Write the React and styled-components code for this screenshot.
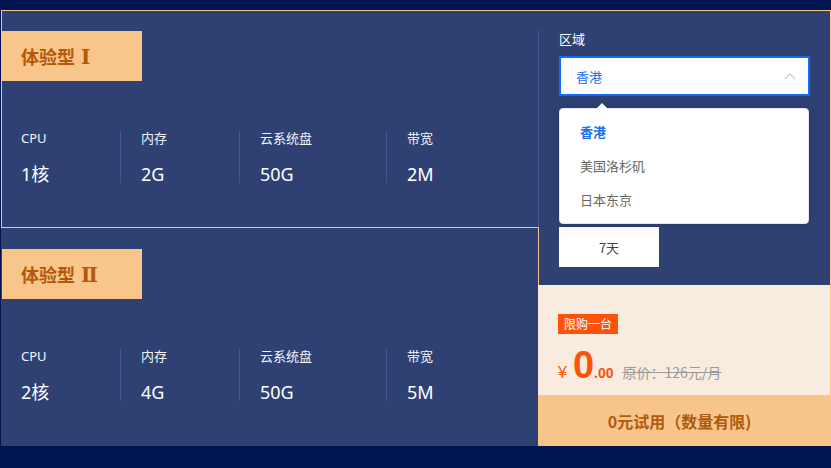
import React from "react";
import styled, { createGlobalStyle } from "styled-components";

const GlobalStyle = createGlobalStyle`
  html, body { margin: 0; padding: 0; background: #001550; }
  body { font-family: "Noto Sans", "Noto Sans CJK SC", sans-serif; }
  * { box-sizing: border-box; }
`;

const ORANGE = "#f7c58a";
const CARD = "#2f4173";

const Page = styled.div`
  width: 831px;
  height: 468px;
  padding: 10px 0 0 1px;
`;

const Wrap = styled.div`
  display: flex;
  width: 830px;
  height: 436px;
`;

const PlanList = styled.div`
  width: 537px;
  display: flex;
  flex-direction: column;
`;

const PlanCard = styled.div`
  height: 218px;
  background: ${CARD};
  border: 1px solid ${(p) => (p.$active ? ORANGE : "transparent")};
  border-right: 0;
  padding-top: 20px;
`;

const Badge = styled.div`
  width: 140px;
  height: 50px;
  background: #f8c68b;
  color: #b5580b;
  font-family: "Noto Sans CJK SC", sans-serif;
  font-weight: 700;
  font-size: 18px;
  line-height: 50px;
  padding-left: 19px;
  white-space: nowrap;
`;

const Numeral = styled.span`
  font-family: "DejaVu Serif", "Liberation Serif", serif;
  font-weight: 700;
  font-size: 20px;
  margin-left: 6px;
`;

const Specs = styled.div`
  display: flex;
  margin-top: 50px;
`;

const Spec = styled.div`
  width: ${(p) => p.$w}px;
  padding-left: ${(p) => (p.$first ? 19 : 20)}px;
  border-left: ${(p) => (p.$first ? "0" : "1px solid #45578a")};
  color: #fff;
  height: 52px;
`;

const SpecLabel = styled.div`
  font-size: 13px;
  line-height: 14px;
  color: #f2f4fa;
`;

const SpecValue = styled.div`
  margin-top: 20px;
  font-size: 18px;
  line-height: 18px;
`;

const Right = styled.div`
  width: 293px;
  display: flex;
  flex-direction: column;
`;

const Config = styled.div`
  position: relative;
  height: 275px;
  background: ${CARD};
  border-top: 1px solid ${ORANGE};
  border-right: 1px solid ${ORANGE};
  padding: 19px 20px 0 21px;

  &::before {
    content: "";
    position: absolute;
    left: 0;
    top: 19px;
    height: 197px;
    width: 1px;
    background: #45578a;
  }
  &::after {
    content: "";
    position: absolute;
    left: 0;
    top: 216px;
    bottom: 0;
    width: 1px;
    background: ${ORANGE};
  }
`;

const FieldLabel = styled.div`
  font-family: "Noto Sans CJK SC", sans-serif;
  font-size: 13px;
  line-height: 18px;
  color: #fff;
`;

const SelectWrap = styled.div`
  position: relative;
  margin-top: 8px;
  width: 251px;
`;

const SelectBox = styled.div`
  height: 40px;
  background: #fff;
  border: 2px solid #0d6cfa;
  display: flex;
  align-items: center;
  justify-content: space-between;
  padding: 0 12px 0 15px;
  font-family: "Noto Sans CJK SC", sans-serif;
  font-size: 13px;
  color: #1a6ef0;
`;

const Dropdown = styled.div`
  position: absolute;
  z-index: 5;
  top: 52px;
  left: 0;
  width: 250px;
  background: #fff;
  border: 1px solid #e4e7ed;
  border-radius: 4px;
  box-shadow: 0 2px 12px rgba(0, 0, 0, 0.1);
  padding: 6px 0 6px;

  &::before {
    content: "";
    position: absolute;
    top: -6px;
    left: 36px;
    border-left: 6px solid transparent;
    border-right: 6px solid transparent;
    border-bottom: 6px solid #fff;
  }
`;

const Option = styled.div`
  height: 34px;
  line-height: 34px;
  padding-left: 20px;
  font-family: "Noto Sans CJK SC", sans-serif;
  font-size: 13px;
  color: ${(p) => (p.$selected ? "#1a6ef0" : "#666")};
  font-weight: ${(p) => (p.$selected ? 700 : 400)};
`;

const Duration = styled.div`
  margin-top: 131px;
  width: 100px;
  height: 40px;
  background: #fff;
  color: #444;
  font-family: "Noto Sans CJK SC", sans-serif;
  font-size: 13px;
  display: flex;
  align-items: center;
  justify-content: center;
`;

const PriceArea = styled.div`
  height: 110px;
  background: #f8ebe0;
  border-right: 1px solid ${ORANGE};
  padding: 27px 0 0 20px;
`;

const Tag = styled.div`
  display: inline-block;
  height: 20px;
  width: 60px;
  background: #fe520a;
  color: #fff;
  font-family: "Noto Sans CJK SC", sans-serif;
  font-size: 12px;
  line-height: 20px;
  text-align: center;
`;

const PriceRow = styled.div`
  display: flex;
  align-items: baseline;
  margin-top: 12px;
  height: 38px;
  line-height: 38px;
  font-family: "Liberation Sans", Arial, sans-serif;
  color: #ff5208;
`;

const Yen = styled.span`
  font-size: 16px;
  margin-right: 6px;
`;

const Big = styled.span`
  font-size: 38px;
  font-weight: 700;
`;

const Cents = styled.span`
  font-size: 14px;
  font-weight: 700;
`;

const Original = styled.span`
  margin-left: 9px;
  font-family: "Noto Sans CJK SC", sans-serif;
  font-size: 14px;
  color: #999;
  text-decoration: line-through;
`;

const TryButton = styled.div`
  height: 51px;
  background: #f7c58a;
  display: flex;
  align-items: center;
  justify-content: center;
  padding-right: 10px;
  font-family: "Noto Sans CJK SC", sans-serif;
  font-size: 16px;
  font-weight: 700;
  color: #b05a0e;
`;

const plans = [
  { name: "体验型", num: "Ⅰ", cpu: "1核", mem: "2G", disk: "50G", bw: "2M", active: true },
  { name: "体验型", num: "Ⅱ", cpu: "2核", mem: "4G", disk: "50G", bw: "5M", active: false },
];

function Chevron() {
  return (
    <svg width="12" height="8" viewBox="0 0 12 8">
      <polyline points="1,7 6,2 11,7" fill="none" stroke="#c9cdd4" strokeWidth="1.3" />
    </svg>
  );
}

export default function App() {
  return (
    <Page>
      <GlobalStyle />
      <Wrap>
        <PlanList>
          {plans.map((p) => (
            <PlanCard key={p.num} $active={p.active}>
              <Badge>
                {p.name}
                <Numeral>{p.num}</Numeral>
              </Badge>
              <Specs>
                <Spec $first $w={118}>
                  <SpecLabel>CPU</SpecLabel>
                  <SpecValue>{p.cpu}</SpecValue>
                </Spec>
                <Spec $w={119}>
                  <SpecLabel>内存</SpecLabel>
                  <SpecValue>{p.mem}</SpecValue>
                </Spec>
                <Spec $w={147}>
                  <SpecLabel>云系统盘</SpecLabel>
                  <SpecValue>{p.disk}</SpecValue>
                </Spec>
                <Spec $w={120}>
                  <SpecLabel>带宽</SpecLabel>
                  <SpecValue>{p.bw}</SpecValue>
                </Spec>
              </Specs>
            </PlanCard>
          ))}
        </PlanList>
        <Right>
          <Config>
            <FieldLabel>区域</FieldLabel>
            <SelectWrap>
              <SelectBox>
                <span>香港</span>
                <Chevron />
              </SelectBox>
              <Dropdown>
                <Option $selected>香港</Option>
                <Option>美国洛杉矶</Option>
                <Option>日本东京</Option>
              </Dropdown>
            </SelectWrap>
            <Duration>7天</Duration>
          </Config>
          <PriceArea>
            <Tag>限购一台</Tag>
            <PriceRow>
              <Yen>¥</Yen>
              <Big>0</Big>
              <Cents>.00</Cents>
              <Original>原价：126元/月</Original>
            </PriceRow>
          </PriceArea>
          <TryButton>0元试用（数量有限)</TryButton>
        </Right>
      </Wrap>
    </Page>
  );
}
